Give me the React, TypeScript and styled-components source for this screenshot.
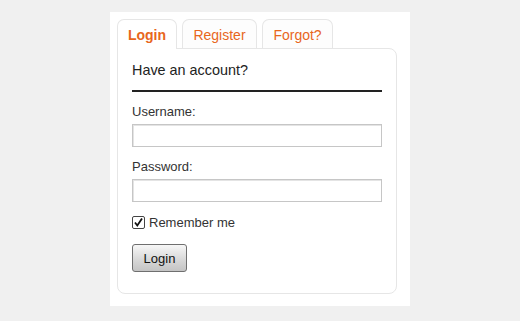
import React from "react";
import styled, { createGlobalStyle } from "styled-components";

const Global = createGlobalStyle`
  html, body { margin: 0; padding: 0; background: #f0f0f0; }
  body { font-family: "Liberation Sans", Arial, sans-serif; }
`;

const Page = styled.div`
  padding: 12px 0 0 110px;
`;

const Panel = styled.div`
  width: 300px;
  box-sizing: border-box;
  background: #fff;
  padding: 7px 13px 12px 7px;
`;

const Tabs = styled.div`
  display: flex;
  gap: 5px;
  height: 29px;
`;

const Tab = styled.div<{ $active?: boolean; $w: number }>`
  width: ${(p) => p.$w}px;
  box-sizing: border-box;
  border: 1px solid #e6e6e6;
  border-bottom: none;
  border-radius: 7px 7px 0 0;
  background: ${(p) => (p.$active ? "#fff" : "#fdfdfd")};
  color: #e8661c;
  font-size: 14px;
  font-weight: ${(p) => (p.$active ? "bold" : "normal")};
  display: flex;
  align-items: center;
  justify-content: center;
  padding-top: 1px;
  position: relative;
  z-index: ${(p) => (p.$active ? 1 : 0)};
  margin-bottom: ${(p) => (p.$active ? "-1px" : "0")};
  height: ${(p) => (p.$active ? "30px" : "29px")};
`;

const Box = styled.div`
  border: 1px solid #e6e6e6;
  border-radius: 0 8px 8px 8px;
  padding: 13px 14px 21px 14px;
`;

const Heading = styled.div`
  font-size: 14.4px;
  line-height: 16px;
  color: #222;
  padding-bottom: 12px;
  border-bottom: 2px solid #222;
`;

const Label = styled.div`
  font-size: 13px;
  line-height: 14px;
  color: #333;
  margin-top: 13px;
`;

const Input = styled.input`
  display: block;
  width: 100%;
  height: 23px;
  box-sizing: border-box;
  margin: 5px 0 0 0;
  border: 1px solid #c6c6c6;
  box-shadow: inset 1px 1px 0 #e4e4e4;
  background: #fff;
  outline: none;
  padding: 2px 4px;
  font: 12px "Liberation Sans", Arial, sans-serif;
`;

const CheckRow = styled.label`
  display: flex;
  align-items: center;
  gap: 4px;
  margin-top: 14px;
  font-size: 13px;
  line-height: 13px;
  color: #333;
`;

const Check = styled.span`
  width: 13px;
  height: 13px;
  box-sizing: border-box;
  border: 1px solid #444;
  border-radius: 2px;
  background: #fff;
  display: flex;
  align-items: center;
  justify-content: center;
`;

const Button = styled.button`
  display: block;
  margin-top: 15px;
  width: 55px;
  height: 28px;
  border: 1px solid #6f6f6f;
  border-radius: 3px;
  background: linear-gradient(#f7f7f7, #d6d6d6 60%, #c4c4c4);
  font: 13px "Liberation Sans", Arial, sans-serif;
  color: #111;
  padding: 0;
`;

export default function App() {
  return (
    <>
      <Global />
      <Page>
        <Panel>
          <Tabs>
            <Tab $active $w={60}>Login</Tab>
            <Tab $w={75}>Register</Tab>
            <Tab $w={71}>Forgot?</Tab>
          </Tabs>
          <Box>
            <Heading>Have an account?</Heading>
            <Label>Username:</Label>
            <Input type="text" />
            <Label>Password:</Label>
            <Input type="password" />
            <CheckRow>
              <Check>
                <svg width="11" height="11" viewBox="0 0 11 11">
                  <path d="M2 5.5 L4.3 8.5 L9 1.5" stroke="#111" strokeWidth="1.8" fill="none" />
                </svg>
              </Check>
              Remember me
            </CheckRow>
            <Button>Login</Button>
          </Box>
        </Panel>
      </Page>
    </>
  );
}
